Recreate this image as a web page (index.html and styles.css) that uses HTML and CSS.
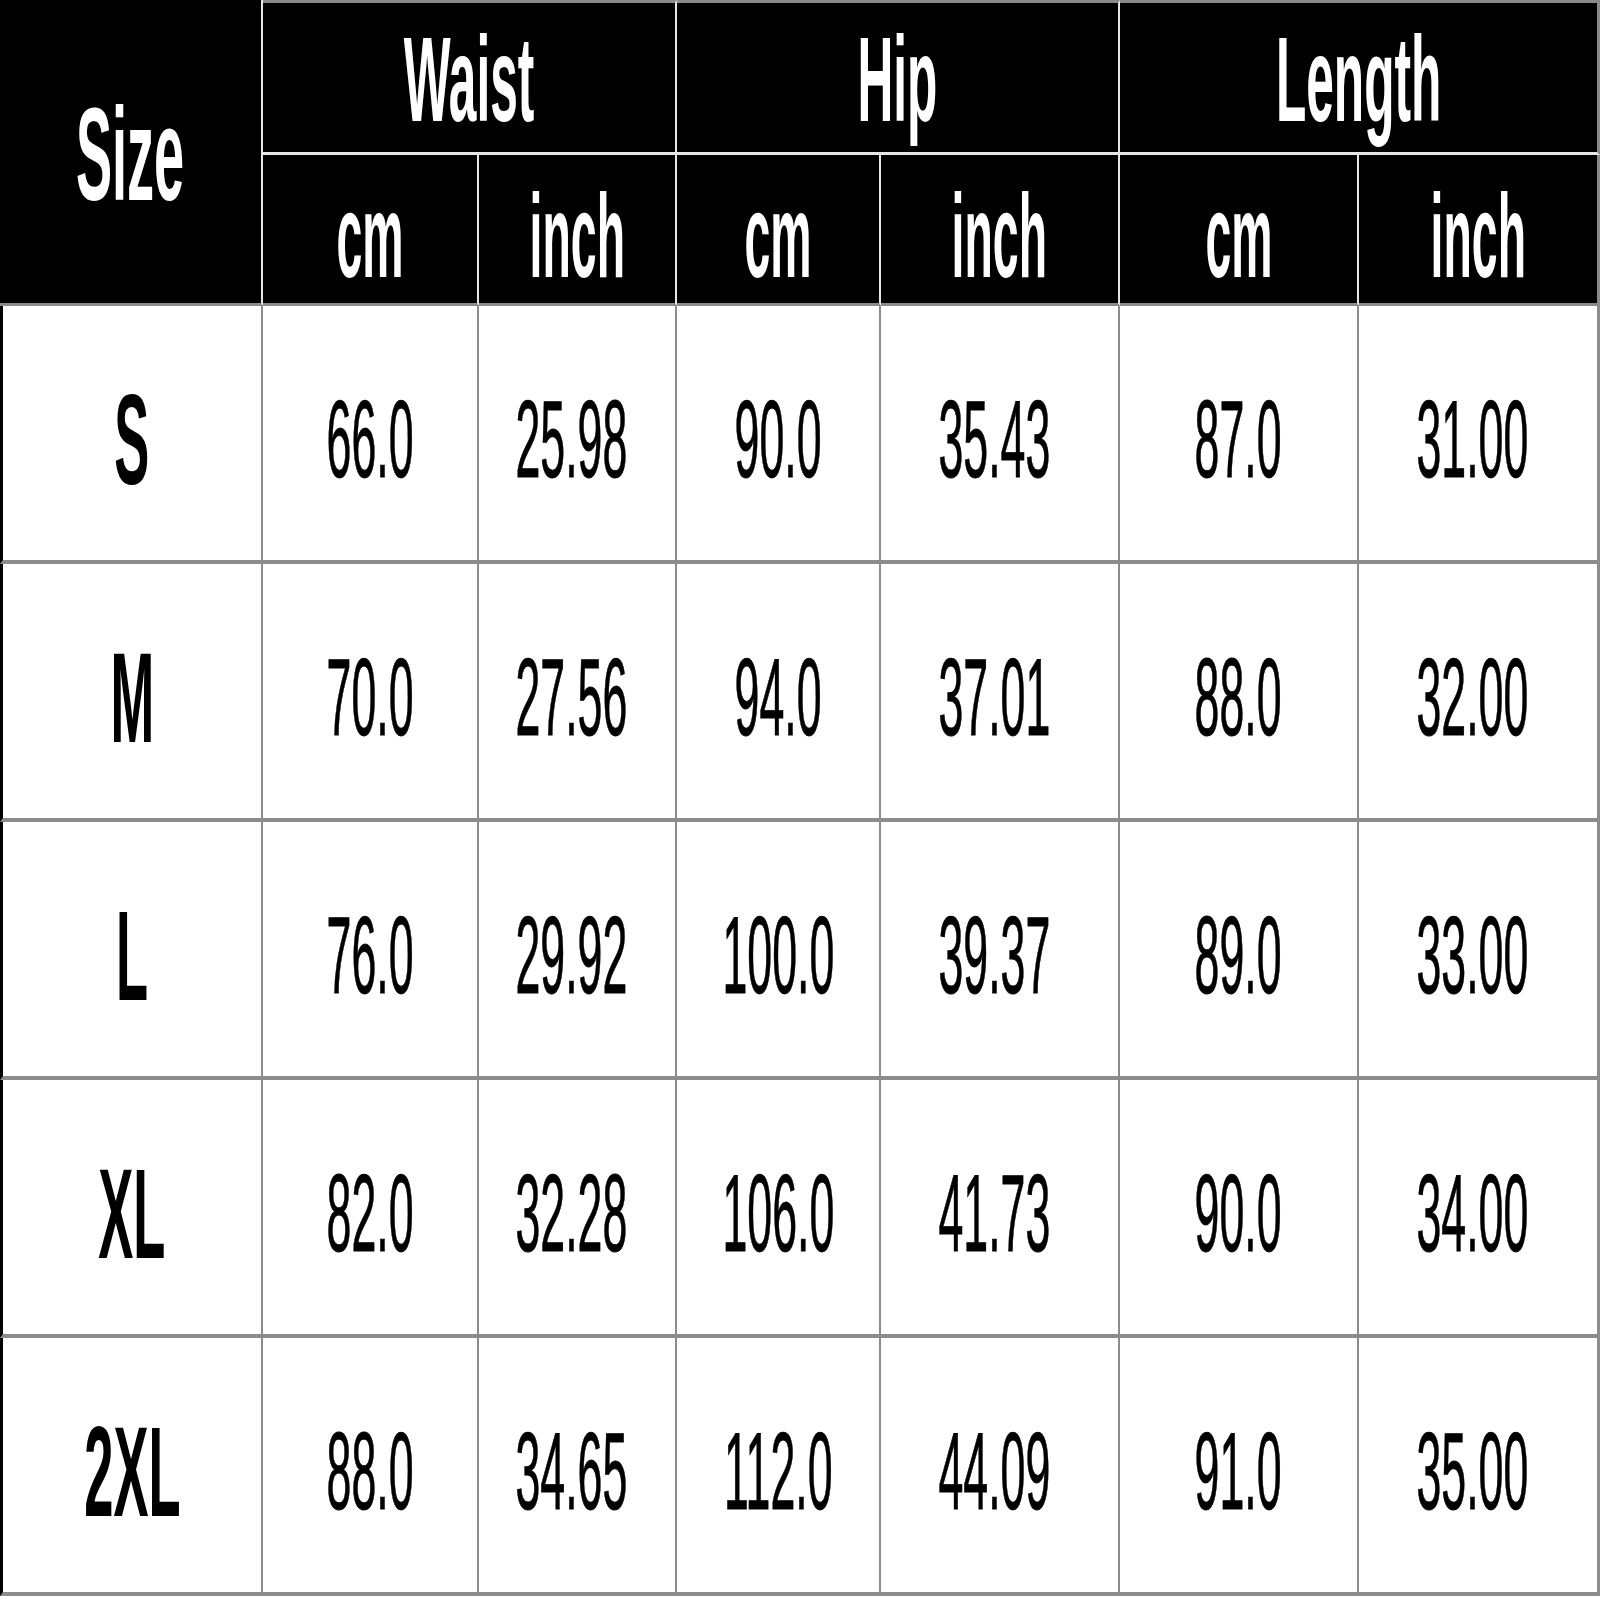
FILE: index.html
```html
<!DOCTYPE html>
<html>
<head>
<meta charset="utf-8">
<link rel="stylesheet" href="styles.css">
</head>
<body>
<div class="chart">
  <div class="cell hd size-hd"><span class="t">Size</span></div>
  <div class="cell hd group"><span class="t">Waist</span></div>
  <div class="cell hd group"><span class="t">Hip</span></div>
  <div class="cell hd group last"><span class="t">Length</span></div>
  <div class="cell hd unit"><span class="t">cm</span></div>
  <div class="cell hd unit"><span class="t">inch</span></div>
  <div class="cell hd unit"><span class="t">cm</span></div>
  <div class="cell hd unit"><span class="t">inch</span></div>
  <div class="cell hd unit"><span class="t">cm</span></div>
  <div class="cell hd unit last"><span class="t">inch</span></div>

  <div class="cell sz"><span class="t">S</span></div>
  <div class="cell num"><span class="t">66.0</span></div>
  <div class="cell num in"><span class="t">25.98</span></div>
  <div class="cell num"><span class="t">90.0</span></div>
  <div class="cell num in"><span class="t">35.43</span></div>
  <div class="cell num"><span class="t">87.0</span></div>
  <div class="cell num in last"><span class="t">31.00</span></div>

  <div class="cell sz"><span class="t">M</span></div>
  <div class="cell num"><span class="t">70.0</span></div>
  <div class="cell num in"><span class="t">27.56</span></div>
  <div class="cell num"><span class="t">94.0</span></div>
  <div class="cell num in"><span class="t">37.01</span></div>
  <div class="cell num"><span class="t">88.0</span></div>
  <div class="cell num in last"><span class="t">32.00</span></div>

  <div class="cell sz"><span class="t">L</span></div>
  <div class="cell num"><span class="t">76.0</span></div>
  <div class="cell num in"><span class="t">29.92</span></div>
  <div class="cell num"><span class="t">100.0</span></div>
  <div class="cell num in"><span class="t">39.37</span></div>
  <div class="cell num"><span class="t">89.0</span></div>
  <div class="cell num in last"><span class="t">33.00</span></div>

  <div class="cell sz"><span class="t">XL</span></div>
  <div class="cell num"><span class="t">82.0</span></div>
  <div class="cell num in"><span class="t">32.28</span></div>
  <div class="cell num"><span class="t">106.0</span></div>
  <div class="cell num in"><span class="t">41.73</span></div>
  <div class="cell num"><span class="t">90.0</span></div>
  <div class="cell num in last"><span class="t">34.00</span></div>

  <div class="cell sz"><span class="t">2XL</span></div>
  <div class="cell num"><span class="t">88.0</span></div>
  <div class="cell num in"><span class="t">34.65</span></div>
  <div class="cell num"><span class="t">112.0</span></div>
  <div class="cell num in"><span class="t">44.09</span></div>
  <div class="cell num"><span class="t">91.0</span></div>
  <div class="cell num in last"><span class="t">35.00</span></div>
</div>
</body>
</html>
```

FILE: styles.css
```css
html, body {
  margin: 0;
  padding: 0;
  background: #ffffff;
}

.chart {
  width: 1600px;
  height: 1600px;
  box-sizing: border-box;
  display: grid;
  grid-template-columns: 263px 216px 198px 204px 239px 239px 241px;
  grid-template-rows: 155px 151px 258px 258px 258px 258px 258px;
  font-family: "Liberation Sans", Arial, sans-serif;
  background: #ffffff;
}

.cell {
  box-sizing: border-box;
  display: flex;
  align-items: center;
  justify-content: center;
  overflow: visible;
  white-space: nowrap;
  min-width: 0;
}

.t {
  display: inline-block;
  transform: scaleX(0.41);
}

/* header */
.hd {
  background: #000000;
  color: #ffffff;
  font-weight: bold;
  border-right: 2px solid #e6e6e6;
}

.size-hd {
  grid-row: 1 / span 2;
  border-bottom: 3px solid #8a8a8a;
  font-size: 132px;
  padding-top: 6px;
}

.group {
  grid-column: span 2;
  border-top: 3px solid #8a8a8a;
  border-bottom: 3px solid #e6e6e6;
  font-size: 121px;
  padding-top: 2px;
}

.unit {
  border-bottom: 3px solid #8a8a8a;
  font-size: 119px;
  padding-top: 12px;
}

.unit .t {
  transform: scaleX(0.39);
}

.hd.last {
  border-right: 3px solid #8a8a8a;
}

/* body */
.sz, .num {
  background: #ffffff;
  color: #000000;
  border-right: 2px solid #8c8c8c;
  border-bottom: 4px solid #8c8c8c;
  padding-top: 12px;
}

.sz {
  border-left: 3px solid #000000;
  font-weight: bold;
  font-size: 128px;
}

.num {
  font-size: 109px;
  -webkit-text-stroke: 0.9px #000000;
}

.num.in {
  padding-right: 11px;
}

.num.last {
  border-right: 3px solid #8c8c8c;
}
```
